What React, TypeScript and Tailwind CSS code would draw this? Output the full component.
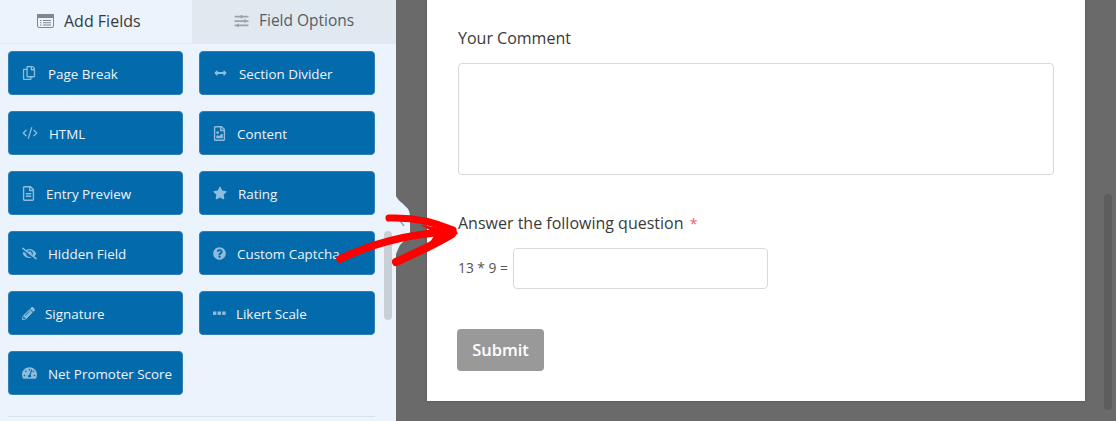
import type { IconType } from 'react-icons';
import {
  FaArrowsAltH,
  FaPencilAlt,
  FaQuestionCircle,
  FaRegFileAlt,
  FaRegFileImage,
  FaRegCopy,
  FaSlidersH,
  FaStar,
  FaEyeSlash,
  FaTachometerAlt,
} from 'react-icons/fa';
import { Code2 } from 'lucide-react';

type FieldIcon = IconType | typeof Code2;

interface FieldItem {
  label: string;
  icon: FieldIcon;
  box: string;
  size: string;
}

function SquareDots({ className }: { className?: string }) {
  return (
    <svg className={className} viewBox="0 0 13 13" fill="currentColor">
      <rect x="0" y="4.5" width="3.4" height="3.4" />
      <rect x="4.6" y="4.5" width="3.4" height="3.4" />
      <rect x="9.2" y="4.5" width="3.4" height="3.4" />
    </svg>
  );
}

function FormIcon({ className }: { className?: string }) {
  return (
    <svg className={className} viewBox="0 0 17 14" fill="none" stroke="currentColor">
      <rect x="0.5" y="0.5" width="16" height="13" rx="1.5" />
      <rect x="0.5" y="0.5" width="16" height="3" fill="currentColor" />
      <path d="M3 6.5h1.5M6 6.5h8M3 8.75h1.5M6 8.75h8M3 11h1.5M6 11h8" strokeWidth="1" />
    </svg>
  );
}

const fields: FieldItem[] = [
  { label: 'Page Break', icon: FaRegCopy, box: 'w-[26px]', size: 'w-[14px] h-[14px]' },
  { label: 'Section Divider', icon: FaArrowsAltH, box: 'w-[26px]', size: 'w-[15px] h-[12px]' },
  { label: 'HTML', icon: Code2, box: 'w-[27px]', size: 'w-[16px] h-[16px]' },
  { label: 'Content', icon: FaRegFileImage, box: 'w-[24px]', size: 'w-[13px] h-[15px]' },
  { label: 'Entry Preview', icon: FaRegFileAlt, box: 'w-[24px]', size: 'w-[13px] h-[15px]' },
  { label: 'Rating', icon: FaStar, box: 'w-[25px]', size: 'w-[14px] h-[14px]' },
  { label: 'Hidden Field', icon: FaEyeSlash, box: 'w-[26px]', size: 'w-[15px] h-[13px]' },
  { label: 'Custom Captcha', icon: FaQuestionCircle, box: 'w-[24px]', size: 'w-[13px] h-[13px]' },
  { label: 'Signature', icon: FaPencilAlt, box: 'w-[23px]', size: 'w-[13px] h-[13px]' },
  { label: 'Likert Scale', icon: SquareDots, box: 'w-[23px]', size: 'w-[13px] h-[13px]' },
  { label: 'Net Promoter Score', icon: FaTachometerAlt, box: 'w-[26px]', size: 'w-[15px] h-[14px]' },
];

function FieldButton({ item }: { item: FieldItem }) {
  const Icon = item.icon;
  return (
    <div className="flex h-[44px] items-center rounded-[4px] border border-[#2f7fb8] bg-[#036aab] pl-[13px] text-[13.4px] text-[#eef5fa]">
      <span className={`${item.box} flex shrink-0 items-center`}>
        <Icon className={`${item.size} text-[#8fbcdc]`} />
      </span>
      <span className="whitespace-nowrap pt-[3px]">{item.label}</span>
    </div>
  );
}

export default function App() {
  return (
    <div
      className="relative flex h-[421px] w-[1116px] overflow-hidden bg-[#6a6a6a]"
      style={{ fontFamily: '"Open Sans", "Noto Sans", sans-serif' }}
    >
      {/* Left panel */}
      <div className="relative h-full w-[396px] shrink-0 bg-[#ebf3fc]">
        <div className="flex h-[44px] border-b border-[#e0e8f0] pb-[2px] text-[15.5px]">
          <div className="flex w-[192px] items-center pl-[37px] text-[16px] font-medium text-[#3a3a3a]">
            <FormIcon className="mr-[10px] h-[14px] w-[17px] text-[#7f8890]" />
            Add Fields
          </div>
          <div className="-mb-[2px] flex flex-1 items-center bg-[#e0e8f0] pb-[2px] pl-[42px] text-[#555d66]">
            <FaSlidersH className="mr-[10px] h-[14px] w-[15px] text-[#9aa2aa]" />
            Field Options
          </div>
        </div>

        <div className="grid w-[367px] grid-cols-[175px_176px] gap-x-[16px] gap-y-[16px] pl-[8px] pt-[7px]">
          {fields.map((item) => (
            <FieldButton key={item.label} item={item} />
          ))}
        </div>

        <div className="ml-[8px] mt-[21px] h-px w-[367px] bg-[#d8e2ec]" />

        {/* Scrollbar */}
        <div className="absolute left-[384px] top-[231px] h-[89px] w-[8px] rounded-full bg-[#c9cfd6]" />
      </div>

      {/* Right canvas */}
      <div className="flex-1 pl-[31px]">
        <div className="h-[401px] w-[658px] bg-white px-[31px] text-[#3a3a3a] shadow-[0_0_2px_rgba(0,0,0,0.3)]">
          <div className="pt-[27px] text-[16px] font-medium leading-[22px]">Your Comment</div>
          <div className="mt-[14px] h-[112px] w-[596px] rounded-[4px] border border-[#d9d9d9] bg-white" />

          <div className="mt-[37px] h-[22px] text-[16px] font-medium leading-[22px]">
            Answer the following question <span className="ml-[2px] text-[14px] font-normal text-[#e8646a]">*</span>
          </div>
          <div className="mt-[14px] flex items-center">
            <span className="w-[55px] whitespace-pre text-[13.8px] text-[#555555]">13 * 9 =</span>
            <div className="h-[41px] w-[255px] rounded-[4px] border border-[#d9d9d9] bg-white" />
          </div>
          <div className="-ml-px mt-[40px] flex h-[42px] w-[87px] items-center justify-center rounded-[4px] bg-[#999999] text-[16.5px] font-semibold text-white">
            Submit
          </div>
        </div>
      </div>

      {/* Canvas scrollbar */}
      <div className="absolute left-[1104px] top-[194px] h-[216px] w-[8px] rounded-full bg-[#5d5d5d]" />

      {/* Sidebar toggle handle */}
      <svg className="absolute left-[396px] top-[190px]" width="18" height="80" viewBox="0 0 18 80">
        <path d="M0 6 C3 12 6 12 9 16 C13 19 14 22 14 28 L14 42 C13 47 9 50 7 52 C3 55 2 60 0 64 Z" fill="#ebf3fc" />
        <path d="M4 31 L8 36" stroke="#9aa2aa" strokeWidth="1.5" />
      </svg>

      {/* Red annotation arrow */}
      <svg className="absolute left-[330px] top-[205px]" width="140" height="70" viewBox="330 205 140 70" fill="none" stroke="#ff0000" strokeLinecap="round">
        <path d="M340 259 C365 247 400 235 445 232" strokeWidth="7.5" />
        <path d="M389 218 C415 217 435 222 453 230" strokeWidth="7" />
        <path d="M396 262 C418 252 436 244 452 234" strokeWidth="8" />
        <path d="M420 225 L456 230 L458 234 L428 245 L436 233 Z" fill="#ff0000" stroke="none" />
      </svg>
    </div>
  );
}
